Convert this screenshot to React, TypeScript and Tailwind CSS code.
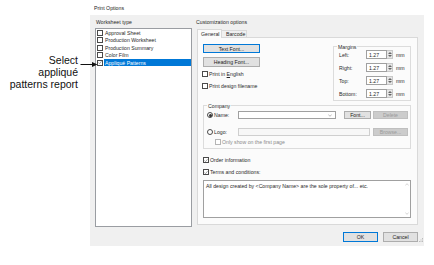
import React from "react";

const Check = ({ checked = false, disabled = false }: { checked?: boolean; disabled?: boolean }) => (
  <span
    className={`w-[6px] h-[6px] border ${disabled ? "border-[#b5b5b5]" : "border-[#4a4a4a]"} bg-white flex items-center justify-center shrink-0`}
  >
    {checked && (
      <svg width="5" height="5" viewBox="0 0 5 5">
        <path d="M0.6 2.6 L1.9 3.9 L4.4 0.9" stroke="#444" strokeWidth="0.6" fill="none" />
      </svg>
    )}
  </span>
);

const Radio = ({ checked = false }: { checked?: boolean }) => (
  <span className="w-[6px] h-[6px] rounded-full border border-[#4a4a4a] bg-white flex items-center justify-center shrink-0">
    {checked && <span className="w-[3px] h-[3px] rounded-full bg-[#333]" />}
  </span>
);

const Btn = ({
  children,
  w,
  primary = false,
  disabled = false,
  h = "h-[9px]",
}: {
  children: React.ReactNode;
  w: string;
  primary?: boolean;
  disabled?: boolean;
  h?: string;
}) => (
  <div
    className={`${w} ${h} flex items-center justify-center border ${
      primary ? "border-[#0078d7]" : disabled ? "border-[#bfbfbf]" : "border-[#adadad]"
    } ${disabled ? "bg-[#cccccc] text-[#9a9a9a]" : "bg-[#e1e1e1] text-[#222]"} shrink-0`}
  >
    {children}
  </div>
);

const MarginRow = ({ label }: { label: string }) => (
  <div className="flex items-center h-[9px]">
    <span className="w-[27px]">{label}</span>
    <div className="w-[21px] h-[9px] border border-[#a0a0a0] bg-white flex items-center pl-[2px]">1.27</div>
    <div className="w-[6px] h-[9px] bg-[#e6e6e6] border-y border-r border-[#c8c8c8] flex flex-col items-center justify-center gap-[1px]">
      <svg width="4" height="2" viewBox="0 0 4 2">
        <path d="M0 2 L2 0 L4 2 Z" fill="#666" />
      </svg>
      <svg width="4" height="2" viewBox="0 0 4 2">
        <path d="M0 0 L2 2 L4 0 Z" fill="#666" />
      </svg>
    </div>
    <span className="ml-[3px]">mm</span>
  </div>
);

const items = ["Approval Sheet", "Production Worksheet", "Production Summary", "Color Film", "Appliqué Patterns"];

export default function App() {
  return (
    <div className="w-[434px] h-[265px] bg-white flex relative font-['Liberation_Sans',Arial,sans-serif] overflow-hidden">
      {/* callout */}
      <div className="w-[90px] shrink-0 pt-[54px] pr-[12px] text-right text-[10.5px] leading-[12px] text-[#111]">
        Select
        <br />
        appliqué
        <br />
        patterns report
      </div>
      <svg className="absolute left-[80px] top-[61px]" width="19" height="7" viewBox="0 0 19 7">
        <line x1="0.5" y1="3.5" x2="14" y2="3.5" stroke="#111" strokeWidth="1" />
        <path d="M12 1 L17.5 3.5 L12 6 Z" fill="#111" />
      </svg>

      {/* dialog */}
      <div className="w-[334px] shrink-0 flex flex-col text-[5.2px] leading-[6px] text-[#2a2a2a]">
        <div className="h-[15px] pl-[4px] pt-[5px] text-[#222]">Print Options</div>
        <div className="h-[231px] bg-[#f0f0f0] flex flex-col pl-[5px] pr-[6px]">
          <div className="flex h-[212px]">
            {/* left column */}
            <div className="w-[97px] shrink-0 flex flex-col">
              <div className="mt-[4px] pl-[1px] h-[6px]">Worksheet type</div>
              <div className="mt-[3px] h-[199px] bg-white border border-[#9a9da2] pt-[0.3px]">
                {items.map((it, i) => (
                  <div key={it} className="h-[7.4px] flex items-center pl-[1px]">
                    <Check checked={i === 4} />
                    <span
                      className={`ml-[1px] pl-[1px] h-[7.4px] flex items-center flex-1 ${
                        i === 4 ? "bg-[#0078d7] text-white" : ""
                      }`}
                    >
                      {it}
                    </span>
                  </div>
                ))}
              </div>
            </div>

            {/* right column */}
            <div className="ml-[5px] w-[221px] flex flex-col">
              <div className="mt-[4px] -ml-[1px] h-[6px]">Customization options</div>
              <div className="mt-[4px] flex items-end h-[8px] relative z-10">
                <div className="w-[25px] h-[9px] -mb-[1px] border-t border-x border-[#d9d9d9] bg-[#fbfbfb] flex items-center pl-[3px]">
                  General
                </div>
                <div className="w-[25px] h-[7px] border-t border-r border-[#d9d9d9] bg-[#f0f0f0] flex items-center pl-[4px]">
                  Barcode
                </div>
              </div>
              <div className="h-[188px] border border-[#d9d9d9] bg-[#fbfbfb] flex flex-col pl-[5px] pt-[6px]">
                <div className="flex h-[57px]">
                  <div className="w-[130px] flex flex-col">
                    <Btn w="w-[57px]" primary>
                      Text Font...
                    </Btn>
                    <div className="mt-[4px]">
                      <Btn w="w-[57px]" h="h-[9.5px]">
                        Heading Font...
                      </Btn>
                    </div>
                    <div className="mt-[4.5px] h-[6px] flex items-center -ml-[1px]">
                      <Check />
                      <span className="ml-[1px]">
                        Print in <span className="underline">E</span>nglish
                      </span>
                    </div>
                    <div className="mt-[5.7px] h-[6px] flex items-center -ml-[1px]">
                      <Check />
                      <span className="ml-[1px]">Print design filename</span>
                    </div>
                  </div>
                  <div className="mt-[2px] w-[78px] h-[55px] border border-[#dcdcdc] relative flex flex-col pl-[5px] pt-[3px] gap-[4px]">
                    <span className="absolute -top-[3.5px] left-[3px] px-[1px] bg-[#fbfbfb]">Margins</span>
                    <MarginRow label="Left:" />
                    <MarginRow label="Right:" />
                    <MarginRow label="Top:" />
                    <MarginRow label="Bottom:" />
                  </div>
                </div>

                {/* company */}
                <div className="mt-[4px] w-[208px] h-[44px] border border-[#dcdcdc] relative flex flex-col pl-[3px] pt-[5px]">
                  <span className="absolute -top-[3.5px] left-[3px] px-[1px] bg-[#fbfbfb]">Company</span>
                  <div className="flex items-center h-[8px]">
                    <div className="w-[31px] flex items-center">
                      <Radio checked />
                      <span className="ml-[1px]">Name:</span>
                    </div>
                    <div className="w-[98px] h-[8px] bg-white border border-[#a0a0a0] flex items-center justify-end pr-[3px]">
                      <svg width="4" height="3" viewBox="0 0 4 3">
                        <path d="M0.3 0.5 L2 2.3 L3.7 0.5" stroke="#777" strokeWidth="0.5" fill="none" />
                      </svg>
                    </div>
                    <div className="ml-[8px]">
                      <Btn w="w-[27px]" h="h-[8px]">
                        Font...
                      </Btn>
                    </div>
                    <div className="ml-[2px]">
                      <Btn w="w-[35px]" h="h-[8px]" disabled>
                        Delete
                      </Btn>
                    </div>
                  </div>
                  <div className="mt-[8.5px] flex items-center h-[8.5px]">
                    <div className="w-[31px] flex items-center">
                      <Radio />
                      <span className="ml-[1px]">Logo:</span>
                    </div>
                    <div className="w-[132px] h-[8.5px] bg-[#f7f7f7] border border-[#cfcfcf]" />
                    <div className="ml-[3px]">
                      <Btn w="w-[35px]" h="h-[8.5px]" disabled>
                        Browse...
                      </Btn>
                    </div>
                  </div>
                  <div className="mt-[3px] h-[6px] flex items-center pl-[8px] text-[#8a8a8a]">
                    <Check disabled />
                    <span className="ml-[1px]">Only show on the first page</span>
                  </div>
                </div>

                <div className="mt-[8px] h-[6px] flex items-center">
                  <Check checked />
                  <span className="ml-[1px]">Order information</span>
                </div>
                <div className="mt-[6px] h-[6px] flex items-center">
                  <Check checked />
                  <span className="ml-[1px]">Terms and conditions:</span>
                </div>
                <div className="mt-[5px] w-[208px] h-[38px] bg-white border border-[#a0a0a0] flex">
                  <div className="flex-1 pl-[2px] pt-[2px]">
                    All design created by &lt;Company Name&gt; are the sole property of... etc.
                  </div>
                  <div className="w-[7px] flex flex-col justify-between items-center py-[2px]">
                    <svg width="4" height="3" viewBox="0 0 4 3">
                      <path d="M0.3 2.5 L2 0.7 L3.7 2.5" stroke="#aaa" strokeWidth="0.5" fill="none" />
                    </svg>
                    <svg width="4" height="3" viewBox="0 0 4 3">
                      <path d="M0.3 0.5 L2 2.3 L3.7 0.5" stroke="#aaa" strokeWidth="0.5" fill="none" />
                    </svg>
                  </div>
                </div>
              </div>
            </div>
          </div>

          {/* bottom buttons */}
          <div className="mt-[5px] flex justify-end relative">
            <Btn w="w-[35px]" h="h-[10px]" primary>
              OK
            </Btn>
            <div className="ml-[5px]">
              <Btn w="w-[35px]" h="h-[10px]">
                Cancel
              </Btn>
            </div>
            <svg className="absolute -right-[5px] top-[6px]" width="4" height="4" viewBox="0 0 4 4">
              <rect x="3" y="0" width="1" height="1" fill="#bbb" />
              <rect x="1.5" y="1.5" width="1" height="1" fill="#bbb" />
              <rect x="3" y="1.5" width="1" height="1" fill="#bbb" />
              <rect x="0" y="3" width="1" height="1" fill="#bbb" />
              <rect x="1.5" y="3" width="1" height="1" fill="#bbb" />
              <rect x="3" y="3" width="1" height="1" fill="#bbb" />
            </svg>
          </div>
        </div>
      </div>
    </div>
  );
}
